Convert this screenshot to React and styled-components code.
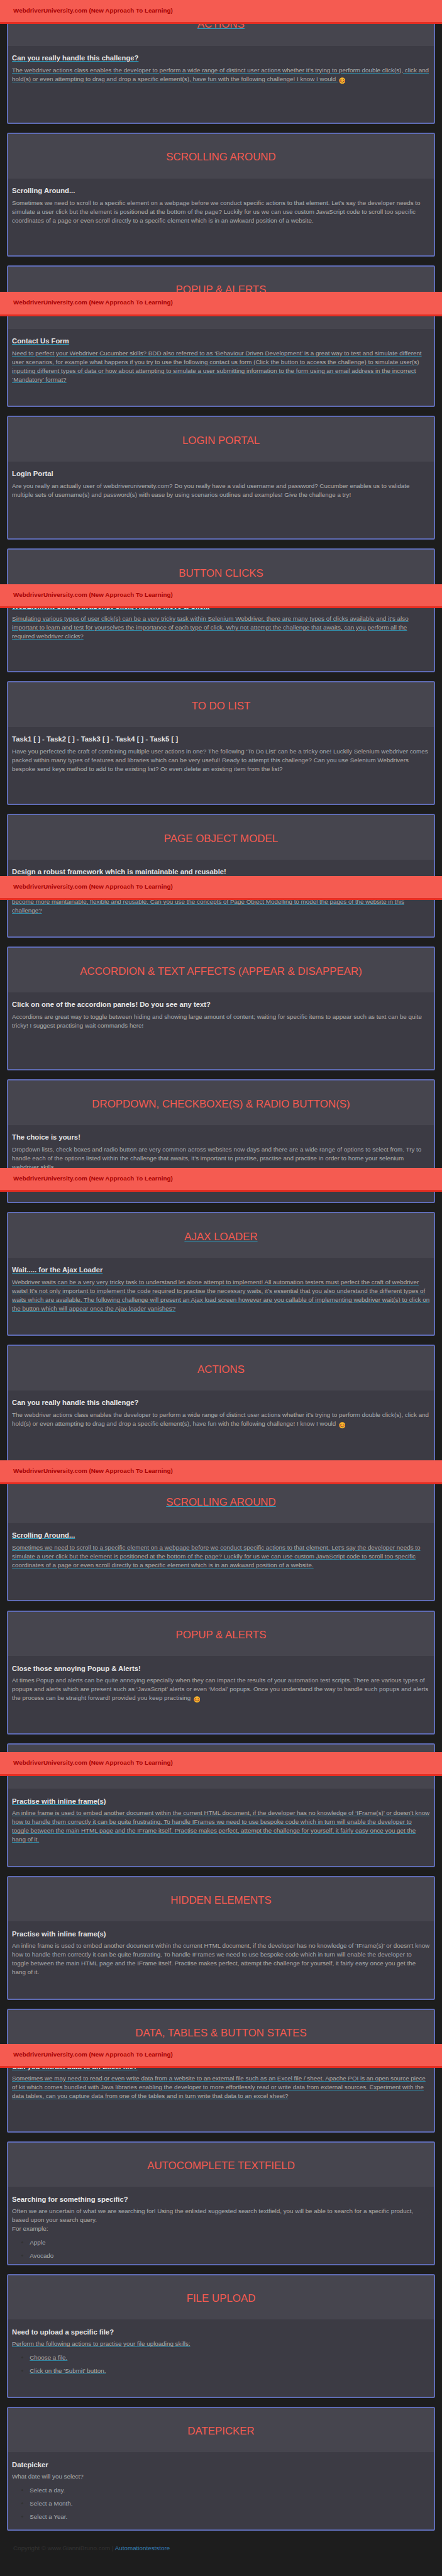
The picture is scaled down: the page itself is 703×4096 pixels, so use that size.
import React from "react";
import styled, { createGlobalStyle, css } from "styled-components";

const px = (n) => `${((n * 4096) / 7278).toFixed(3)}px`;

const Global = createGlobalStyle`
  * { box-sizing: border-box; }
  body { margin: 0; background: #1d1d1d; }
`;

const Page = styled.div`
  position: relative;
  width: 703px;
  height: 4096px;
  overflow: hidden;
  background: #1d1d1d;
  font-family: "Liberation Sans", Arial, sans-serif;
  font-size: ${px(17.5)};
  line-height: ${px(25)};
  color: #333;
`;

const Navbar = styled.header`
  position: absolute;
  left: 0;
  top: ${(p) => px(p.$offset)};
  z-index: 2;
  display: flex;
  align-items: center;
  width: 100%;
  height: ${px(68)};
  padding: 0 ${px(37.5)} ${px(1.5)};
  background: #f55b51;
  border-bottom: 3px solid #e62e22;
`;

const Brand = styled.span`
  font-weight: 700;
  color: #a80303;
  white-space: nowrap;
`;

const Screen = styled.section`
  display: flex;
  flex-direction: column;
  gap: ${px(25)};
  padding: 0 ${px(19)};
  ${(p) =>
    p.$clip
      ? css`
          position: relative;
          z-index: 1;
          height: ${px(825)};
          overflow: hidden;
        `
      : css`
          margin-top: ${px(-25)};
        `}
`;

const Card = styled.article`
  flex: none;
  height: ${px(350)};
  background: #3c3b44;
  border: 2px solid #5f6cb5;
  border-radius: ${px(5)};
  overflow: hidden;
`;

const CardTitle = styled.div`
  display: flex;
  align-items: center;
  justify-content: center;
  height: calc(${px(129)} - 2px);
  padding-top: ${px(8)};
  background: #46454e;
`;

const linked = css`
  text-decoration: ${(p) => (p.$linked ? "underline" : "none")};
  text-decoration-color: #2ba0c2;
`;

const softLinked = css`
  text-decoration: ${(p) => (p.$linked ? "underline" : "none")};
  text-decoration-color: #308aa6;
`;

const Title = styled.h2`
  margin: 0;
  font-size: ${px(30)};
  font-weight: 400;
  line-height: 1.1;
  color: #f55b51;
  white-space: nowrap;
  ${linked}
`;

const CardBody = styled.div`
  padding: ${px(22)} 0 0 ${px(11.4)};
`;

const Heading = styled.h4`
  margin: 0;
  font-size: ${px(20)};
  font-weight: 700;
  line-height: ${px(26)};
  color: #e4e4e4;
  white-space: nowrap;
  ${linked}
`;

const Copy = styled.p`
  margin: ${px(9)} 0 0;
  color: #acacac;
  white-space: pre;
  ${softLinked}
`;

const List = styled.ul`
  margin: ${px(12.7)} 0 0;
  padding: 0 0 0 ${px(50)};
`;

const Item = styled.li`
  margin-bottom: ${px(12.3)};
`;

const ItemText = styled.span`
  color: #acacac;
  ${softLinked}
`;

const Footer = styled.footer`
  padding: ${px(37.5)} ${px(37.5)} 0;
`;

const FooterLink = styled.a`
  color: #337ab7;
`;

const Smiley = styled.svg`
  width: ${px(19)};
  height: ${px(19)};
  margin: ${px(-4)} 0 ${px(-4)} ${px(3)};
  vertical-align: ${px(-4)};
`;

const Smile = () => (
  <Smiley viewBox="0 0 20 20">
    <circle cx="10" cy="10" r="9.3" fill="#fdb52c" />
    <circle cx="4" cy="11" r="2.2" fill="#f4663a" />
    <circle cx="16" cy="11" r="2.2" fill="#f4663a" />
    <g fill="none" stroke="#4a3628" strokeWidth="1.5" strokeLinecap="round">
      <path d="M4.5 7.5Q6.3 4.8 8 7.5M12 7.5Q13.7 4.8 15.5 7.5" />
      <path d="M5.5 12.5Q10 17.5 14.5 12.5" />
    </g>
  </Smiley>
);

const actionsCopy = [
  "The webdriver actions class enables the developer to perform a wide range of distinct user actions whether it’s trying to perform double click(s), click and",
  "hold(s) or even attempting to drag and drop a specific element(s), have fun with the following challenge! I know I would ",
];
const scrollingCopy = [
  "Sometimes we need to scroll to a specific element on a webpage before we conduct specific actions to that element. Let’s say the developer needs to",
  "simulate a user click but the element is positioned at the bottom of the page? Luckily for us we can use custom JavaScript code to scroll too specific",
  "coordinates of a page or even scroll directly to a specific element which is in an awkward position of a website.",
];
const iframeCopy = [
  "An inline frame is used to embed another document within the current HTML document, if the developer has no knowledge of ‘IFrame(s)’ or doesn’t know",
  "how to handle them correctly it can be quite frustrating. To handle IFrames we need to use bespoke code which in turn will enable the developer to",
  "toggle between the main HTML page and the IFrame itself. Practise makes perfect, attempt the challenge for yourself, it fairly easy once you get the",
  "hang of it.",
];

const firstScreen = [
  { title: "ACTIONS", heading: "Can you really handle this challenge?", copy: actionsCopy, smile: true, titleLinked: true, linked: true },
  { title: "SCROLLING AROUND", heading: "Scrolling Around...", copy: scrollingCopy },
  { title: "POPUP & ALERTS" },
];

const challenges = [
  {
    heading: "Contact Us Form",
    linked: true,
    copy: [
      "Need to perfect your Webdriver Cucumber skills? BDD also referred to as ‘Behaviour Driven Development’ is a great way to test and simulate different",
      "user scenarios, for example what happens if you try to use the following contact us form (Click the button to access the challenge) to simulate user(s)",
      "inputting different types of data or how about attempting to simulate a user submitting information to the form using an email address in the incorrect",
      "‘Mandatory’ format?",
    ],
  },
  {
    title: "LOGIN PORTAL",
    heading: "Login Portal",
    copy: [
      "Are you really an actually user of webdriveruniversity.com? Do you really have a valid username and password? Cucumber enables us to validate",
      "multiple sets of username(s) and password(s) with ease by using scenarios outlines and examples! Give the challenge a try!",
    ],
  },
  {
    title: "BUTTON CLICKS",
    heading: "WebElement Click, JavaScript Click, Actions Move & Click!",
    linked: true,
    copy: [
      "Simulating various types of user click(s) can be a very tricky task within Selenium Webdriver, there are many types of clicks available and it’s also",
      "important to learn and test for yourselves the importance of each type of click. Why not attempt the challenge that awaits, can you perform all the",
      "required webdriver clicks?",
    ],
  },
  {
    title: "TO DO LIST",
    heading: "Task1 [ ] - Task2 [ ] - Task3 [ ] - Task4 [ ] - Task5 [ ]",
    copy: [
      "Have you perfected the craft of combining multiple user actions in one? The following ‘To Do List’ can be a tricky one! Luckily Selenium webdriver comes",
      "packed within many types of features and libraries which can be very useful! Ready to attempt this challenge? Can you use Selenium Webdrivers",
      "bespoke send keys method to add to the existing list? Or even delete an existing item from the list?",
    ],
  },
  {
    title: "PAGE OBJECT MODEL",
    heading: "Design a robust framework which is maintainable and reusable!",
    headingPlain: true,
    linked: true,
    copy: [
      "",
      "",
      "become more maintainable, flexible and reusable. Can you use the concepts of Page Object Modelling to model the pages of the website in this",
      "challenge?",
    ],
  },
  {
    title: "ACCORDION & TEXT AFFECTS (APPEAR & DISAPPEAR)",
    heading: "Click on one of the accordion panels! Do you see any text?",
    copy: [
      "Accordions are great way to toggle between hiding and showing large amount of content; waiting for specific items to appear such as text can be quite",
      "tricky! I suggest practising wait commands here!",
    ],
  },
  {
    title: "DROPDOWN, CHECKBOXE(S) & RADIO BUTTON(S)",
    heading: "The choice is yours!",
    copy: [
      "Dropdown lists, check boxes and radio button are very common across websites now days and there are a wide range of options to select from. Try to",
      "handle each of the options listed within the challenge that awaits, it’s important to practise, practise and practise in order to home your selenium",
      "webdriver skills.",
    ],
  },
  {
    title: "AJAX LOADER",
    titleLinked: true,
    heading: "Wait..... for the Ajax Loader",
    linked: true,
    copy: [
      "Webdriver waits can be a very very tricky task to understand let alone attempt to implement! All automation testers must perfect the craft of webdriver",
      "waits! It’s not only important to implement the code required to practise the necessary waits, it’s essential that you also understand the different types of",
      "waits which are available. The following challenge will present an Ajax load screen however are you callable of implementing webdriver wait(s) to click on",
      "the button which will appear once the Ajax loader vanishes?",
    ],
  },
  { title: "ACTIONS", heading: "Can you really handle this challenge?", copy: actionsCopy, smile: true },
  { title: "SCROLLING AROUND", titleLinked: true, heading: "Scrolling Around...", copy: scrollingCopy, linked: true },
  {
    title: "POPUP & ALERTS",
    heading: "Close those annoying Popup & Alerts!",
    smile: true,
    copy: [
      "At times Popup and alerts can be quite annoying especially when they can impact the results of your automation test scripts. There are various types of",
      "popups and alerts which are present such as ‘JavaScript’ alerts or even ‘Modal’ popups. Once you understand the way to handle such popups and alerts",
      "the process can be straight forward! provided you keep practising ",
    ],
  },
  { heading: "Practise with inline frame(s)", copy: iframeCopy, linked: true },
  { title: "HIDDEN ELEMENTS", heading: "Practise with inline frame(s)", copy: iframeCopy },
  {
    title: "DATA, TABLES & BUTTON STATES",
    heading: "Can you extract data to an Excel file?",
    linked: true,
    copy: [
      "Sometimes we may need to read or even write data from a website to an external file such as an Excel file / sheet. Apache POI is an open source piece",
      "of kit which comes bundled with Java libraries enabling the developer to more effortlessly read or write data from external sources. Experiment with the",
      "data tables, can you capture data from one of the tables and in turn write that data to an excel sheet?",
    ],
  },
  {
    title: "AUTOCOMPLETE TEXTFIELD",
    heading: "Searching for something specific?",
    copy: [
      "Often we are uncertain of what we are searching for! Using the enlisted suggested search textfield, you will be able to search for a specific product,",
      "based upon your search query.",
      "For example:",
    ],
    items: ["Apple", "Avocado"],
  },
  {
    title: "FILE UPLOAD",
    heading: "Need to upload a specific file?",
    headingPlain: true,
    linked: true,
    copy: ["Perform the following actions to practise your file uploading skills:"],
    items: ["Choose a file.", "Click on the 'Submit' button."],
  },
  {
    title: "DATEPICKER",
    heading: "Datepicker",
    copy: ["What date will you select?"],
    items: ["Select a day.", "Select a Month.", "Select a Year."],
  },
];

function Challenge({ title, titleLinked, heading, headingPlain, linked: isLinked, copy, smile, items }) {
  return (
    <Card>
      <CardTitle>{title && <Title $linked={titleLinked}>{title}</Title>}</CardTitle>
      {heading && (
        <CardBody>
          <Heading $linked={isLinked && !headingPlain}>{heading}</Heading>
          <Copy $linked={isLinked}>
            {copy.join("\n")}
            {smile && <Smile />}
          </Copy>
          {items && (
            <List>
              {items.map((item) => (
                <Item key={item}>
                  <ItemText $linked={isLinked}>{item}</ItemText>
                </Item>
              ))}
            </List>
          )}
        </CardBody>
      )}
    </Card>
  );
}

const barOffsets = [0, 825, 1650, 2475, 3300, 4125, 4950, 5775];

export default function App() {
  return (
    <Page>
      <Global />
      {barOffsets.map((offset) => (
        <Navbar key={offset} $offset={offset}>
          <Brand>WebdriverUniversity.com (New Approach To Learning)</Brand>
        </Navbar>
      ))}
      <Screen $clip>
        {firstScreen.map((c, i) => (
          <Challenge key={i} {...c} />
        ))}
      </Screen>
      <Screen>
        {challenges.map((c, i) => (
          <Challenge key={i} {...c} />
        ))}
      </Screen>
      <Footer>
        Copyright © www.GianniBruno.com | <FooterLink>Automationteststore</FooterLink>
      </Footer>
    </Page>
  );
}
